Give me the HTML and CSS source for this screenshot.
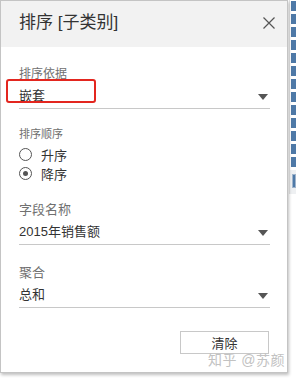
FILE: index.html
```html
<!DOCTYPE html>
<html lang="zh-CN">
<head>
    <meta charset="UTF-8">
    <meta name="viewport" content="width=device-width, initial-scale=1.0">
    <title>排序 [子类别]</title>
    <link rel="stylesheet" href="styles.css">
</head>
<body>
    <div class="page">
        <div class="dialog">
            <div class="dialog-header">
                <span class="dialog-title">排序 [子类别]</span>
                <svg class="close" width="12" height="12" viewBox="0 0 12 12">
                    <path d="M0.5 0.5 L11.5 11.5 M11.5 0.5 L0.5 11.5" stroke="#555" stroke-width="1.2" fill="none"/>
                </svg>
            </div>
            <div class="dialog-body">
                <div class="field field-first">
                    <div class="label">排序依据</div>
                    <div class="select">
                        <span>嵌套</span>
                        <span class="caret"></span>
                    </div>
                    <div class="mark"></div>
                </div>

                <div class="field field-radios">
                    <div class="label label-small">排序顺序</div>
                    <div class="radio"><span class="dot"></span><span>升序</span></div>
                    <div class="radio"><span class="dot checked"></span><span>降序</span></div>
                </div>

                <div class="field field-name">
                    <div class="label label-big">字段名称</div>
                    <div class="select">
                        <span>2015年销售额</span>
                        <span class="caret"></span>
                    </div>
                </div>

                <div class="field field-agg">
                    <div class="label label-big">聚合</div>
                    <div class="select">
                        <span>总和</span>
                        <span class="caret"></span>
                    </div>
                </div>

                <div class="actions">
                    <button type="button" class="btn">清除</button>
                </div>
            </div>
            <div class="watermark">知乎 @苏颜</div>
        </div>

        <div class="chart-strip">
            <div class="bar"></div><div class="bar"></div><div class="bar"></div>
            <div class="bar"></div><div class="bar"></div><div class="bar"></div>
            <div class="bar"></div><div class="bar"></div><div class="bar"></div>
            <div class="bar"></div><div class="bar"></div><div class="bar"></div>
            <div class="bar"></div>
            <div class="legend"><div class="legend-box"></div></div>
        </div>
    </div>
</body>
</html>
```

FILE: styles.css
```css
body {
    margin: 0;
    padding: 0;
    background: #fff;
    font-family: 'Liberation Sans', 'Noto Sans CJK SC', sans-serif;
    color: #333;
}

.page {
    display: flex;
    align-items: flex-start;
    width: 296px;
    height: 380px;
    overflow: hidden;
}

.dialog {
    position: relative;
    width: 286px;
    height: 371px;
    flex-shrink: 0;
    border: 1px solid #c4c4c4;
    background: #fff;
    box-shadow: 1px 2px 3px rgba(0, 0, 0, 0.25);
}

.dialog-header {
    height: 46px;
    background: #f2f2f2;
    display: flex;
    align-items: center;
    justify-content: space-between;
    padding: 0 12px 0 18px;
}

.dialog-title {
    font-size: 17px;
    line-height: 20px;
    color: #333;
    margin-top: -2px;
}

.close {
    display: block;
    margin-top: -2px;
}

.dialog-body {
    padding: 19px 17px 0 18px;
}

.field {
    position: relative;
}

.label {
    font-size: 12px;
    line-height: 16px;
    color: #707070;
}

.label-small {
    font-size: 11px;
}

.label-big {
    font-size: 13px;
}

.select {
    margin-top: 4px;
    height: 20px;
    line-height: 20px;
    padding-bottom: 2px;
    border-bottom: 1px solid #c8c8c8;
    font-size: 13px;
    color: #333;
    display: flex;
    align-items: center;
    justify-content: space-between;
    padding-right: 2px;
}

.caret {
    width: 0;
    height: 0;
    border-left: 5px solid transparent;
    border-right: 5px solid transparent;
    border-top: 6px solid #555;
    margin-top: 1px;
}

/* red annotation box drawn over the first field */
.mark {
    position: absolute;
    left: -13px;
    top: 13px;
    width: 86px;
    height: 20px;
    border: 2px solid #e3261f;
    border-radius: 3px;
}

.field-radios {
    margin-top: 17px;
}

.radio {
    display: flex;
    align-items: center;
    height: 19px;
    font-size: 13px;
    color: #333;
}

.field-radios .label {
    margin-bottom: 3px;
}

.dot {
    width: 11px;
    height: 11px;
    border: 1px solid #555;
    border-radius: 50%;
    margin-right: 9px;
    display: flex;
    align-items: center;
    justify-content: center;
}

.dot.checked::after {
    content: '';
    width: 5px;
    height: 5px;
    border-radius: 50%;
    background: #555;
}

.field-name {
    margin-top: 19px;
}

.field-agg {
    margin-top: 20px;
}

.actions {
    display: flex;
    justify-content: flex-end;
    margin-top: 23px;
}

.btn {
    width: 89px;
    height: 23px;
    border: 1px solid #c8c8c8;
    background: #fff;
    font-family: 'Liberation Sans', 'Noto Sans CJK SC', sans-serif;
    font-size: 13px;
    color: #333;
    padding: 0;
    margin-right: 1px;
}

.watermark {
    position: absolute;
    right: 2px;
    bottom: 4px;
    font-size: 14px;
    line-height: 16px;
    color: #c2c2c2;
    letter-spacing: 0.5px;
}

.chart-strip {
    margin-left: 1px;
    padding-top: 1px;
    width: 7px;
    border-left: 1px solid #e4e4e4;
}

.bar {
    height: 10px;
    margin-bottom: 3px;
    margin-left: 1px;
    background: #4e79a7;
}

.legend {
    margin-top: 2px;
    height: 20px;
    background: #eef0f2;
    padding: 4px 0 0 2px;
}

.legend-box {
    height: 12px;
    background: #4e79a7;
    border: 1px solid #9fb4cc;
}
```
